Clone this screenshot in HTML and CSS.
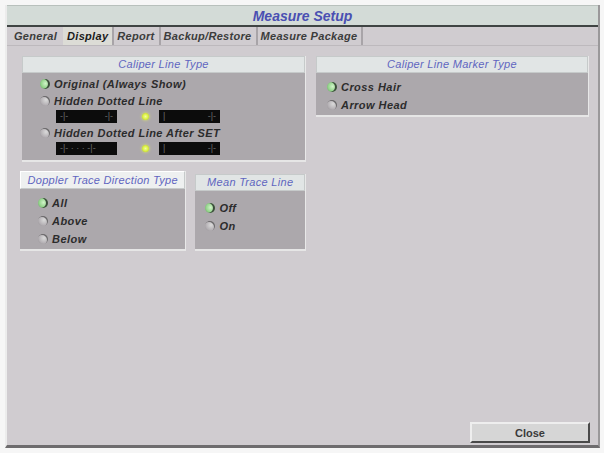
FILE: index.html
```html
<!DOCTYPE html>
<html lang="en">
<head>
    <meta charset="UTF-8">
    <title>Measure Setup</title>
    <link rel="stylesheet" href="styles.css">
</head>
<body>
    <div class="window">
        <div class="titlebar">Measure Setup</div>
        <div class="tabs">
            <span class="tab">General</span>
            <span class="tab active">Display</span>
            <span class="tab">Report</span>
            <span class="tab">Backup/Restore</span>
            <span class="tab">Measure Package</span>
        </div>
        <div class="content">
            <div class="columns">
                <div class="left-col">
                    <div class="group caliper">
                        <div class="group-head">Caliper Line Type</div>
                        <div class="group-body">
                            <div class="option"><span class="radio on"></span>Original (Always Show)</div>
                            <div class="option"><span class="radio"></span>Hidden Dotted Line</div>
                            <div class="bars">
                                <span class="bar"><i>-|-</i><i>-|-</i></span>
                                <span class="dot"></span>
                                <span class="bar"><i>|</i><i>-|-</i></span>
                            </div>
                            <div class="option"><span class="radio"></span>Hidden Dotted Line After SET</div>
                            <div class="bars">
                                <span class="bar"><i>-|- · · · -|-</i></span>
                                <span class="dot"></span>
                                <span class="bar"><i>|</i><i>-|-</i></span>
                            </div>
                        </div>
                    </div>
                    <div class="row">
                        <div class="group doppler">
                            <div class="group-head tab-head">Doppler Trace Direction Type</div>
                            <div class="group-body">
                                <div class="option"><span class="radio on"></span>All</div>
                                <div class="option"><span class="radio"></span>Above</div>
                                <div class="option"><span class="radio"></span>Below</div>
                            </div>
                        </div>
                        <div class="group mean">
                            <div class="group-head">Mean Trace Line</div>
                            <div class="group-body">
                                <div class="option"><span class="radio on"></span>Off</div>
                                <div class="option"><span class="radio"></span>On</div>
                            </div>
                        </div>
                    </div>
                </div>
                <div class="right-col">
                    <div class="group marker">
                        <div class="group-head">Caliper Line Marker Type</div>
                        <div class="group-body">
                            <div class="option"><span class="radio on"></span>Cross Hair</div>
                            <div class="option"><span class="radio"></span>Arrow Head</div>
                        </div>
                    </div>
                </div>
            </div>
            <div class="footer">
                <button class="close-btn">Close</button>
            </div>
        </div>
    </div>
</body>
</html>
```

FILE: styles.css
```css
body {
    margin: 0;
    background-color: #f6f6f6;
    font-family: "Liberation Sans", Arial, sans-serif;
    color: #2a2a2a;
}
.window {
    margin: 5px 4px 0 5px;
    height: 443px;
    display: flex;
    flex-direction: column;
    border-left: 2px solid #ececec;
    border-right: 2px solid #9a989a;
    border-bottom: 3px solid #6e6c6e;
    background-color: #d0ccd0;
    box-sizing: border-box;
}
.titlebar {
    height: 22px;
    line-height: 20px;
    background-color: #d3dbd7;
    border-top: 1px solid #b8c0bc;
    border-bottom: 2px solid #3f4443;
    text-align: center;
    font-size: 14px;
    font-weight: bold;
    font-style: italic;
    color: #4a4fb2;
    box-sizing: border-box;
}
.tabs {
    display: flex;
    height: 18px;
    padding-left: 4px;
    border-bottom: 1px solid #bdb9bd;
}
.tab {
    padding: 0 4px 0 3px;
    font-size: 11px;
    letter-spacing: 0.3px;
    font-weight: bold;
    font-style: italic;
    line-height: 18px;
    color: #3c3c3c;
    border-right: 2px solid #a8a4a8;
}
.tab:first-child {
    border-right: none;
    padding-right: 6px;
}
.tab.active {
    background-color: #dcdcd6;
    color: #1a1a1a;
    padding: 0 4px;
}
.content {
    flex: 1;
    display: flex;
    flex-direction: column;
    padding: 10px 7px 2px 15px;
}
.columns {
    display: flex;
    gap: 10px;
}
.left-col {
    width: 284px;
    display: flex;
    flex-direction: column;
    gap: 9px;
}
.right-col {
    width: 273px;
}
.group {
    background-color: #aca8ac;
    border-right: 1px solid #e8e8e8;
    border-bottom: 2px solid #e6e6e6;
    box-sizing: border-box;
}
.group-head {
    height: 15px;
    line-height: 15px;
    background-color: #e1e5e5;
    border: 1px solid #c6caca;
    text-align: center;
    font-size: 11px;
    letter-spacing: 0.3px;
    font-style: italic;
    color: #6065c0;
}
.group-body {
    padding: 3px 0 3px 18px;
}
.option {
    display: flex;
    align-items: center;
    height: 18px;
    font-size: 11px;
    letter-spacing: 0.45px;
    font-weight: bold;
    font-style: italic;
    color: #2c2c2c;
}
.radio {
    width: 10px;
    height: 10px;
    border-radius: 50%;
    margin-right: 4px;
    background: radial-gradient(circle at 60% 40%, #dadada 0, #b4b0b4 60%, #8a868a 100%);
    box-shadow: -1px 1px 0 #6a686a inset;
}
.radio.on {
    background: radial-gradient(circle at 55% 45%, #d0f4c8 0, #94d48c 55%, #5a9a54 100%);
    box-shadow: -2px 0 0 #3c4a3c inset;
}
.caliper {
    height: 106px;
}
.caliper .group-body {
    padding-top: 2px;
}
.caliper .option {
    height: 17px;
}
.bars {
    display: flex;
    align-items: center;
    height: 14px;
    margin: 0 0 1px 16px;
}
.bar {
    width: 61px;
    height: 13px;
    background-color: #0c0c0c;
    display: flex;
    justify-content: space-between;
    padding: 0 4px;
    box-sizing: border-box;
}
.bar i {
    font-style: normal;
    font-size: 9px;
    line-height: 13px;
    color: #6a6a6a;
}
.dot {
    width: 7px;
    height: 7px;
    border-radius: 50%;
    margin: 0 10px 0 25px;
    background: radial-gradient(circle, #f4ff9a 0, #d6ec38 60%, #b2c830 100%);
    box-shadow: 0 0 3px #e6f060;
}
.row {
    display: flex;
    gap: 9px;
    align-items: flex-start;
}
.doppler {
    width: 167px;
    height: 80px;
    margin-left: -2px;
}
.tab-head {
    background-color: #eef0f0;
    border-top: 1px solid #ffffff;
    border-left: 1px solid #ffffff;
    height: 16px;
    line-height: 16px;
}
.doppler .group-body {
    padding-top: 5px;
}
.mean {
    width: 111px;
    height: 77px;
    margin-top: 3px;
}
.mean .group-body {
    padding-top: 8px;
    padding-left: 10px;
}
.marker {
    height: 61px;
}
.marker .group-body {
    padding-left: 11px;
    padding-top: 5px;
}
.footer {
    margin-top: auto;
    display: flex;
    justify-content: flex-end;
    padding-right: 1px;
}
.close-btn {
    width: 120px;
    height: 21px;
    background-color: #d6d6d6;
    border: 2px solid;
    border-color: #eeeeee #4a4a4a #4a4a4a #eeeeee;
    font-family: "Liberation Sans", Arial, sans-serif;
    font-size: 11px;
    font-weight: bold;
    color: #3a3a3a;
}
```
